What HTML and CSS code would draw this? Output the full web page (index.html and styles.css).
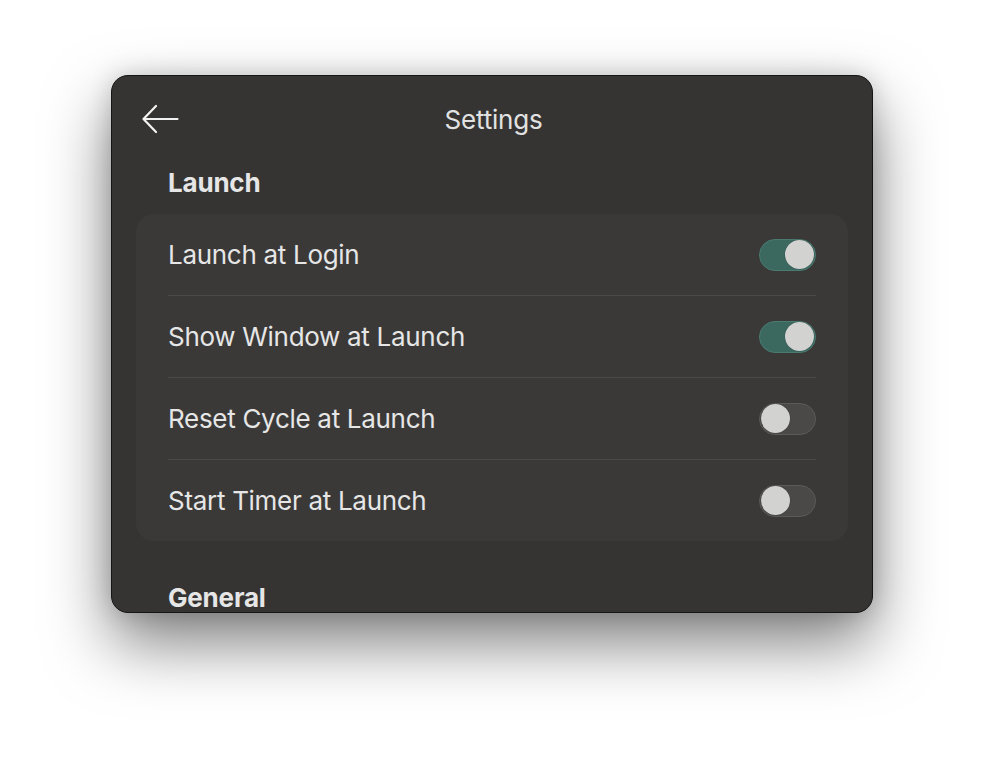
FILE: index.html
```html
<!DOCTYPE html>
<html>
<head>
<meta charset="utf-8">
<link rel="stylesheet" href="styles.css">
</head>
<body>
<div class="window">
  <div class="header">
    <svg class="back" width="38" height="30" viewBox="0 0 38 30">
      <path d="M14 2 L1.5 15 L14 28 M1.5 15 L35.5 15" fill="none" stroke="#f2f2f2" stroke-width="2.2" stroke-linecap="round" stroke-linejoin="round"/>
    </svg>
    <div class="title">Settings</div>
  </div>
  <div class="section-title">Launch</div>
  <div class="card">
    <div class="row"><span class="label">Launch at Login</span><span class="toggle on"><span class="knob"></span></span></div>
    <div class="row"><span class="label">Show Window at Launch</span><span class="toggle on"><span class="knob"></span></span></div>
    <div class="row"><span class="label">Reset Cycle at Launch</span><span class="toggle"><span class="knob"></span></span></div>
    <div class="row"><span class="label">Start Timer at Launch</span><span class="toggle"><span class="knob"></span></span></div>
  </div>
  <div class="section-title general">General</div>
</div>
</body>
</html>
```

FILE: styles.css
```css
html, body {
  margin: 0;
  padding: 0;
  background: #ffffff;
}
body {
  min-height: 760px;
  box-sizing: border-box;
  padding: 75px 0 0 111px;
  font-family: Inter, "Noto Sans", sans-serif;
}
.window {
  width: 762px;
  height: 538px;
  box-sizing: border-box;
  background: #353433;
  border: 1px solid #161515;
  border-radius: 17px;
  overflow: hidden;
  padding: 0 24px;
  box-shadow: 0 30px 65px rgba(0,0,0,0.5), 0 0 24px rgba(0,0,0,0.16);
}
.header {
  position: relative;
  height: 87px;
  display: flex;
  align-items: center;
  justify-content: center;
}
.back {
  position: absolute;
  left: 6px;
  top: 28px;
}
.title {
  color: #e2e2e2;
  font-size: 26px;
  font-weight: 400;
  letter-spacing: -0.2px;
  margin-left: 3px;
}
.section-title {
  color: #e6e6e6;
  font-size: 26px;
  font-weight: 700;
  letter-spacing: -0.2px;
  height: 40px;
  line-height: 40px;
  padding-left: 32px;
  margin-bottom: 11px;
}
.section-title.general {
  margin-top: 37px;
}
.card {
  background: #3a3938;
  border-radius: 18px;
  padding: 0 32px;
}
.row {
  height: 81px;
  display: flex;
  align-items: center;
  justify-content: space-between;
}
.row + .row {
  border-top: 1px solid #4a4948;
}
.label {
  color: #e6e6e6;
  font-size: 26px;
  letter-spacing: -0.3px;
}
.toggle {
  width: 57px;
  height: 32px;
  box-sizing: border-box;
  border-radius: 16px;
  background: #4a4948;
  border: 1px solid #5b5a59;
  display: flex;
  align-items: center;
  padding: 0 1px;
}
.toggle.on {
  background: #3b685f;
  border-color: #4a7a70;
  justify-content: flex-end;
}
.knob {
  width: 29px;
  height: 29px;
  border-radius: 50%;
  background: #d2d2d1;
  box-shadow: 0 0 1px rgba(0,0,0,0.4);
}
```
